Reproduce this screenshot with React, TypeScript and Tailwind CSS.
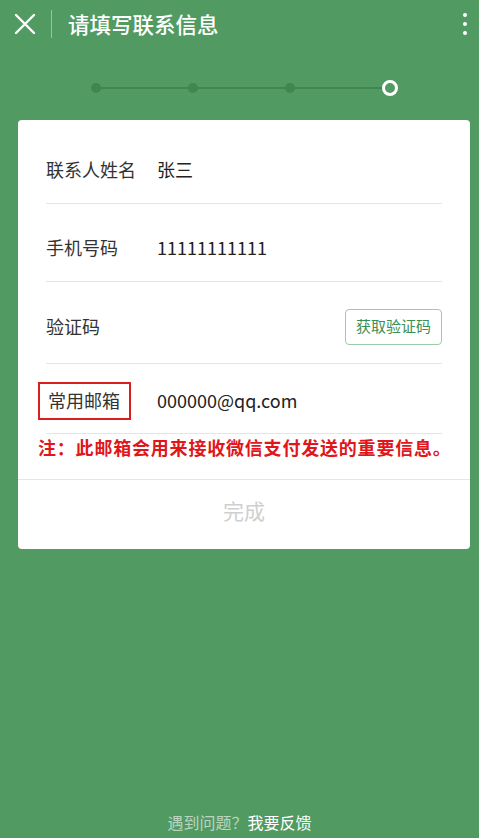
const font = { fontFamily: '"Noto Sans CJK SC", "Noto Sans", sans-serif' };

export default function App() {
  return (
    <div className="min-h-[838px] bg-[#519a62] flex flex-col" style={font}>
      <header className="h-[48px] flex items-center">
        <button className="w-[48px] h-[48px] flex items-center justify-center pl-[2px]">
          <svg width="22" height="22" viewBox="0 0 22 22" stroke="white" strokeWidth="2.4" strokeLinecap="round">
            <path d="M2 2 L20 20 M20 2 L2 20" />
          </svg>
        </button>
        <div className="w-px h-[28px] bg-white/40 ml-[3px]" />
        <h1 className="text-white text-[21.5px] font-medium ml-[16px] flex-1">请填写联系信息</h1>
        <div className="flex flex-col gap-[5px] mr-[12px]">
          <span className="w-[4px] h-[4px] rounded-full bg-white" />
          <span className="w-[4px] h-[4px] rounded-full bg-white" />
          <span className="w-[4px] h-[4px] rounded-full bg-white" />
        </div>
      </header>

      <div className="relative h-[72px]">
        <div className="absolute left-[96px] top-[39px] w-[290px] h-[2px] bg-[#3f8650]" />
        <span className="absolute left-[91px] top-[35px] w-[10px] h-[10px] rounded-full bg-[#3f8650]" />
        <span className="absolute left-[188px] top-[35px] w-[10px] h-[10px] rounded-full bg-[#3f8650]" />
        <span className="absolute left-[285px] top-[35px] w-[10px] h-[10px] rounded-full bg-[#3f8650]" />
        <span className="absolute left-[382px] top-[32px] w-[16px] h-[16px] rounded-full border-[3px] border-white bg-[#519a62]" />
      </div>

      <div className="ml-[18px] mr-[9px] bg-white rounded-[4px] h-[429px] flex flex-col">
        <div className="px-[28px] pt-[6px]">
          <div className="flex items-center h-[78px] pt-[10px] border-b border-[#e5e5e5]">
            <span className="text-[18px] text-[#333] w-[111px]">联系人姓名</span>
            <span className="text-[18px] text-[#222]">张三</span>
          </div>
          <div className="flex items-center h-[78px] pt-[10px] border-b border-[#e5e5e5]">
            <span className="text-[18px] text-[#333] w-[111px]">手机号码</span>
            <span className="text-[18px] text-[#222]">11111111111</span>
          </div>
          <div className="flex items-center h-[82px] pt-[8px] border-b border-[#e5e5e5] justify-between">
            <span className="text-[18px] text-[#333]">验证码</span>
            <button className="h-[36px] w-[97px] border border-[#9ccca6] rounded-[4px] text-[15px] text-[#3c8f52]">获取验证码</button>
          </div>
          <div className="flex items-center h-[70px] pt-[4px] border-b border-[#e5e5e5]">
            <span className="-ml-[8px] pl-[8px] border-2 border-[#d9201f] h-[38px] w-[93px] mr-[26px] flex items-center text-[18px] text-[#333]">常用邮箱</span>
            <span className="text-[18px] text-[#222]">000000@qq.com</span>
          </div>
        </div>
        <p className="pl-[20px] h-[45px] text-[18px] font-bold text-[#e0161b] tracking-[0.8px]">注：此邮箱会用来接收微信支付发送的重要信息。</p>
        <div className="border-t border-[#e5e5e5] flex-1 flex items-start justify-center pt-[15px]">
          <span className="text-[21px] text-[#cfcfcf]">完成</span>
        </div>
      </div>

      <div className="flex-1" />
      <footer className="h-[30px] mb-[1px] flex items-center justify-center text-[16px]">
        <span className="text-white/60">遇到问题？</span>
        <span className="text-white">我要反馈</span>
      </footer>
    </div>
  );
}
